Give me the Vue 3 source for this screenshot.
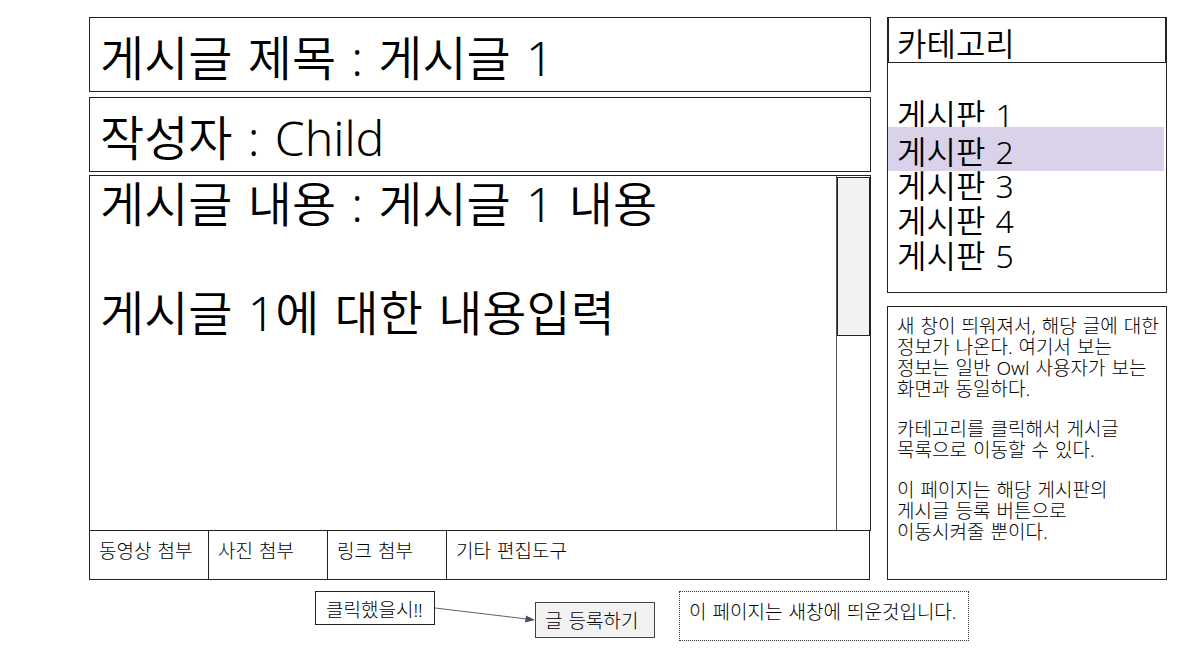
<script setup>
const tools = ['동영상 첨부', '사진 첨부', '링크 첨부', '기타 편집도구']
const boards = [1, 2, 3, 4, 5]
const selected = 2
</script>

<template>
  <div class="page">
    <main class="post">
      <h1 class="field">게시글 제목 <span class="latin">:</span> 게시글 <span class="latin">1</span></h1>
      <p class="field">작성자 <span class="latin">:</span> <span class="latin">Child</span></p>
      <section class="editor">
        <div class="content">
          <p>게시글 내용 <span class="latin">:</span> 게시글 <span class="latin">1</span> 내용</p>
          <p>게시글 <span class="latin">1</span>에 대한 내용입력</p>
        </div>
        <div class="track"><div class="thumb"></div></div>
      </section>
      <div class="tools">
        <button v-for="tool in tools" :key="tool" type="button" class="tool">{{ tool }}</button>
      </div>
    </main>

    <aside class="side">
      <nav class="categories">
        <h2>카테고리</h2>
        <ul>
          <li v-for="n in boards" :key="n" :class="{ selected: n === selected }">
            <a href="#">게시판 <span class="latin">{{ n }}</span></a>
          </li>
        </ul>
      </nav>
      <section class="notes">
        <p>새 창이 띄워져서<span class="latin">,</span> 해당 글에 대한<br>정보가 나온다<span class="latin">.</span> 여기서 보는<br>정보는 일반 <span class="latin">Owl</span> 사용자가 보는<br>화면과 동일하다<span class="latin">.</span></p>
        <p>카테고리를 클릭해서 게시글<br>목록으로 이동할 수 있다<span class="latin">.</span></p>
        <p>이 페이지는 해당 게시판의<br>게시글 등록 버튼으로<br>이동시켜줄 뿐이다<span class="latin">.</span></p>
      </section>
    </aside>

    <footer class="actions">
      <div class="trigger">클릭했을시<span class="latin">!!</span></div>
      <svg class="arrow" viewBox="0 0 100 50" aria-hidden="true">
        <path d="M0 17L92 28" fill="none" stroke="#59617a" stroke-width="1" />
        <path d="M91 24.500L100 29L90 31.500Z" fill="#465066" />
      </svg>
      <button type="button" class="submit">글 등록하기</button>
      <div class="hint">이 페이지는 새창에 띄운것입니다<span class="latin">.</span></div>
    </footer>
  </div>
</template>

<style>
body {
  margin: 0;
  background: #fff;
}
</style>

<style scoped>
.page {
  --line: #222;
  display: grid;
  grid-template-columns: minmax(0, 1fr) 280px;
  column-gap: 16px;
  padding: 17px 17px 0 89px;
  color: #000;
  font-family: "DejaVu Sans", "Noto Sans CJK KR", sans-serif;
  font-weight: 300;
  font-size: 19px;
  line-height: 21px;
}

.page * {
  box-sizing: border-box;
}

h1, h2, p, ul {
  margin: 0;
  padding: 0;
  font-weight: inherit;
}

button {
  font: inherit;
  color: inherit;
}

.latin {
  font-family: "Noto Sans", "Open Sans", sans-serif;
}

.post {
  display: flex;
  flex-direction: column;
}

.field {
  height: 75px;
  margin-bottom: 5px;
  padding: 13px 10px 0;
  border: 1px solid var(--line);
  font-weight: 350;
  font-size: 48px;
  line-height: 54px;
  white-space: nowrap;
}

.field + .field {
  margin-bottom: 3px;
}

.editor {
  display: flex;
  height: 356px;
  border: 1px solid var(--line);
}

.content {
  flex: 1;
  padding: 1px 10px;
  font-weight: 350;
  font-size: 48px;
  line-height: 54px;
}

.content p + p {
  margin-top: 54px;
}

.track {
  width: 34px;
  padding-top: 1px;
  border-left: 1px solid #555;
}

.thumb {
  height: 159px;
  border: 1px solid var(--line);
  background: #f2f2f2;
}

.tools {
  display: flex;
  height: 50px;
  margin: -1px 1px 0 0;
}

.tool {
  width: 120px;
  margin-right: -1px;
  padding: 0 9px 8px;
  border: 1px solid var(--line);
  background: #fff;
  text-align: left;
  white-space: nowrap;
}

.tool:last-child {
  flex: 1;
  margin-right: 0;
}

.side {
  display: flex;
  flex-direction: column;
  gap: 13px;
}

.categories {
  height: 276px;
  border: 1px solid var(--line);
  font-weight: 350;
  font-size: 32px;
  line-height: 35px;
}

.categories h2 {
  height: 45px;
  padding: 10px 8px 0;
  border: 1px solid var(--line);
  border-top: 0;
  font-size: 32px;
  line-height: 35px;
}

.categories ul {
  padding-top: 34px;
  list-style: none;
}

.categories li {
  height: 35px;
  padding-left: 9px;
}

.categories a {
  color: inherit;
  text-decoration: none;
}

.categories .selected {
  position: relative;
  height: 44px;
  margin: -5px 2px -3px 0;
  padding-top: 7px;
  background: #d9d2e9;
}

.categories .selected + li {
  position: relative;
}

.notes {
  flex: 1;
  padding: 9px 9px 0;
  border: 1px solid var(--line);
  white-space: nowrap;
}

.notes p + p {
  margin-top: 19px;
}

.actions {
  grid-column: 1 / -1;
  display: flex;
  align-items: flex-start;
  margin-top: 11px;
  padding-left: 226px;
}

.trigger {
  width: 120px;
  height: 34px;
  padding: 8px 10px 0;
  border: 1px solid var(--line);
  white-space: nowrap;
}

.arrow {
  width: 100px;
  height: 50px;
}

.submit {
  width: 120px;
  height: 36px;
  margin-top: 11px;
  padding: 2px 9px 0;
  border: 1px solid #444;
  background: #f2f2f2;
  text-align: left;
}

.hint {
  width: 290px;
  height: 50px;
  margin-left: 24px;
  padding: 10px 9px 0;
  border: 1px dotted #333;
  white-space: nowrap;
}
</style>
